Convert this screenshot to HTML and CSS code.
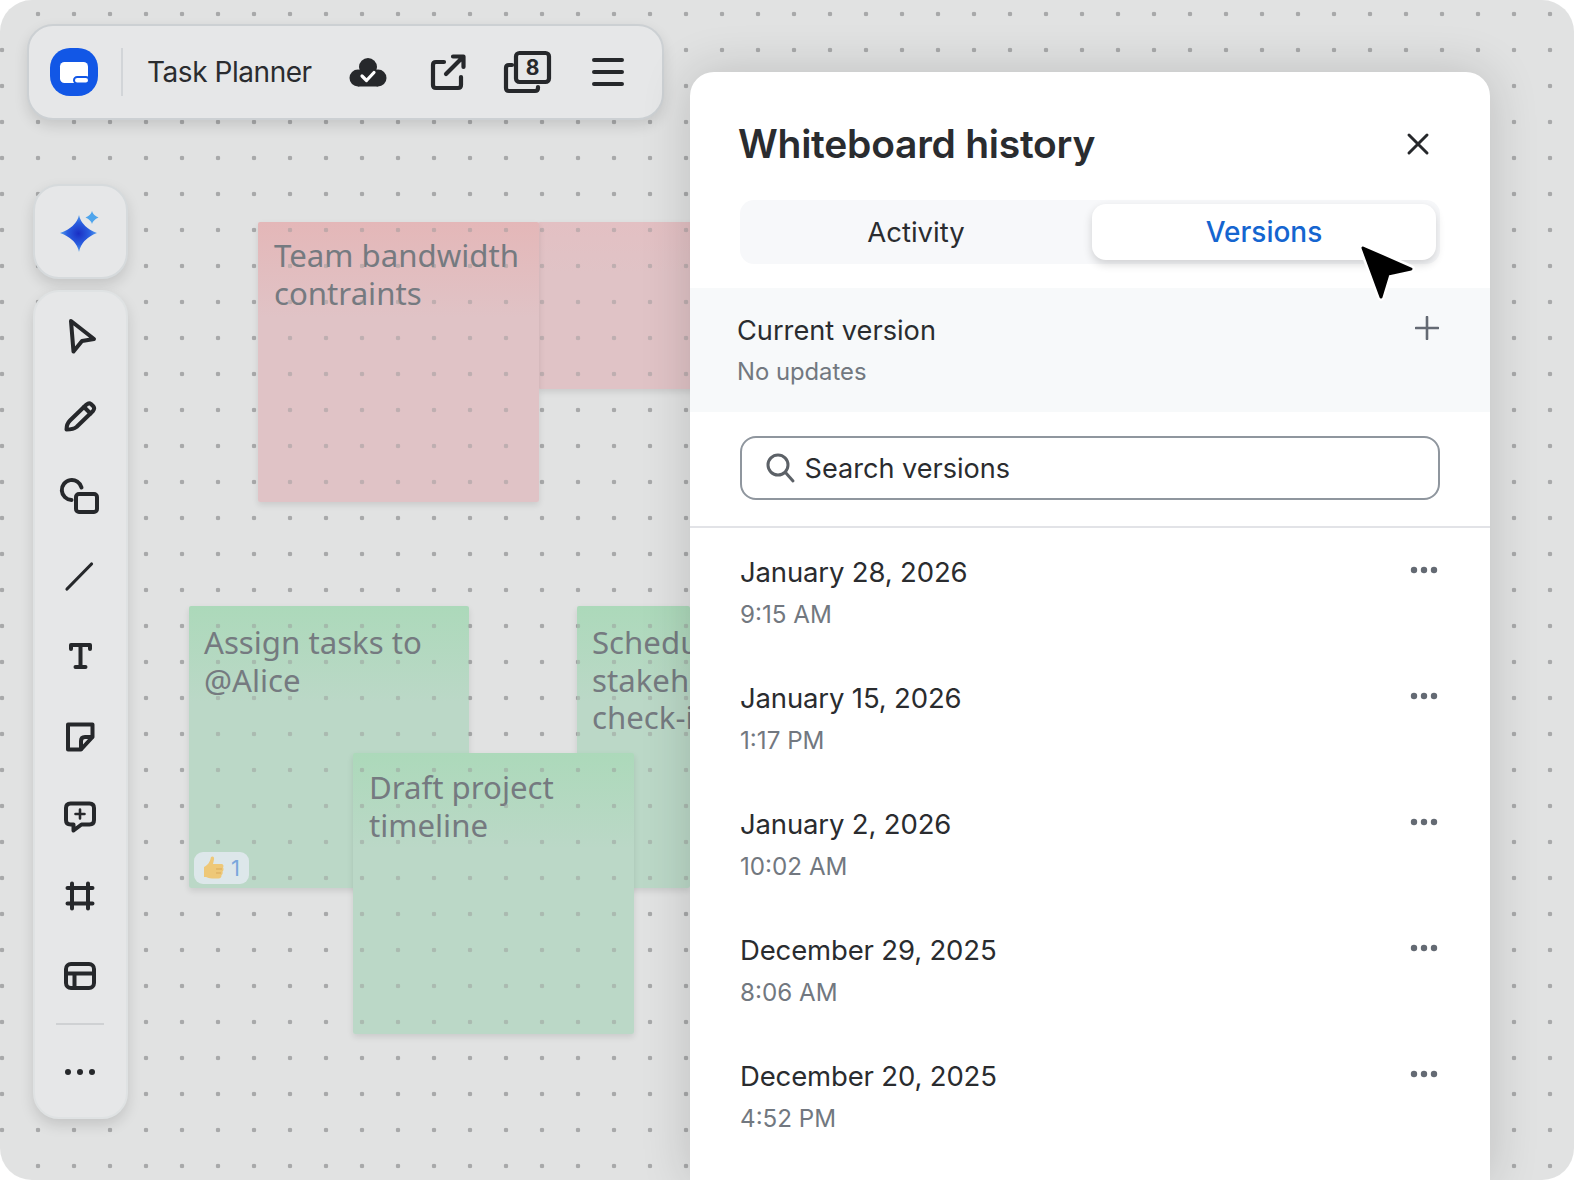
FILE: index.html
```html
<!DOCTYPE html>
<html lang="en">
<head>
<meta charset="utf-8">
<title>Whiteboard history</title>
<link rel="stylesheet" href="styles.css">
</head>
<body>
<main class="canvas">
  <div class="sticky pink s2 flat"></div>
  <div class="sticky pink s0"><p>Team bandwidth contraints</p></div>
  <div class="sticky green s3">
    <p>Assign tasks to @Alice</p>
    <div class="reaction">
      <svg class="thumb" viewBox="0 0 24 26"><path d="M9 2c2-1.500 3.500 0 3 2.500L11 9h8c2.500 0 3 2 2 3.500 1 1.500.5 3-.5 4 .5 1.500 0 3-1 3.500.2 2-1 3.500-3 3.500H10c-3 0-4-1-6-1.500L2 22V12c4-2 6-5 7-10z" fill="#eec878"/><path d="M14 14h6M14 18h5" stroke="#d9a95a" stroke-width="1" fill="none"/></svg>
      <span>1</span>
    </div>
  </div>
  <div class="sticky green s4"><p>Schedule stakeholder check-in</p></div>
  <div class="sticky green s5"><p>Draft project timeline</p></div>

  <header class="topbar">
    <svg class="logo" viewBox="0 0 48 48">
      <rect width="48" height="48" rx="20" fill="#1257e6"/>
      <rect x="10" y="14" width="28" height="21" rx="4.500" fill="#fff"/>
      <rect x="24" y="29" width="15" height="6.500" rx="3.200" fill="#fff" stroke="#1257e6" stroke-width="2"/>
    </svg>
    <span class="sep"></span>
    <h2 class="doc-title">Task Planner</h2>
    <svg class="ico ico-cloud" viewBox="0 0 40 40">
      <circle cx="20" cy="15" r="9" fill="#26282b"/><circle cx="10" cy="26" r="8.500" fill="#26282b"/><circle cx="30" cy="26" r="8.500" fill="#26282b"/><rect x="10" y="20" width="20" height="14.500" fill="#26282b"/>
      <path d="M14 24l4.500 4.500 7.500-8" fill="none" stroke="#fff" stroke-width="3.200" stroke-linecap="round" stroke-linejoin="round"/>
    </svg>
    <svg class="ico ico-share" viewBox="0 0 40 40" fill="none" stroke="#26282b" stroke-width="4.200" stroke-linecap="round" stroke-linejoin="round">
      <path d="M16 10H8q-3 0-3 3v20q0 3 3 3h22q3 0 3-3v-8"/><path d="M18 22L35 5M25 4.500h10.500V15"/>
    </svg>
    <svg class="ico-copies" viewBox="0 -1 48 44" fill="none" stroke="#26282b" stroke-width="4.200" stroke-linecap="round" stroke-linejoin="round">
      <rect x="13" y="2" width="33" height="29" rx="3.500"/>
      <path d="M9 14H6q-3 0-3 3v20q0 3 3 3h26q3 0 3-3v-1"/>
      <text x="29.500" y="23.500" class="count">8</text>
    </svg>
    <svg class="ico-menu" viewBox="0 0 36 32" stroke="#26282b" stroke-width="4" stroke-linecap="round">
      <path d="M4 4h28M4 16h28M4 28h28"/>
    </svg>
  </header>

  <nav class="tools">
    <button class="ai-btn" aria-label="AI">
      <svg class="ico" viewBox="0 0 40 40">
        <defs>
          <radialGradient id="st" cx="50%" cy="50%" r="55%"><stop offset="0" stop-color="#1a2fc4"/><stop offset=".55" stop-color="#2a5fe0"/><stop offset="1" stop-color="#63b2ef"/></radialGradient>
        </defs>
        <path d="M20 3Q22.500 15 38 21 22.500 27 20 40 17.500 27 1 21 17.500 15 20 3z" fill="url(#st)"/>
        <path d="M33 -1Q34 3 39.500 5.500 34 8 33 12 32 8 26.500 5.500 32 3 33-1z" fill="#4fa5ec"/>
      </svg>
    </button>
    <div class="rail">
      <button class="tool"><svg class="ico" viewBox="0 0 40 40"><path d="M11 5L34 23l-12 2-8.500 10.500z"/></svg></button>
      <button class="tool"><svg class="ico" viewBox="0 0 40 40"><path d="M6.500 33.500c0-4.500 1.500-7 3.500-9L26.500 8.500q2.500-2 4.500-.5l2.500 2.500q1.500 2-.5 4.500L16.500 31c-2.500 2-5.500 2.500-10 2.500z"/><path d="M24 11l6.500 6.500"/></svg></button>
      <button class="tool"><svg class="ico" viewBox="0 0 40 40"><path d="M21.500 11.500A10 10 0 1 0 11.500 24"/><rect x="16" y="18" width="21" height="18" rx="3"/></svg></button>
      <button class="tool"><svg class="ico thin" viewBox="0 0 40 40"><path d="M7 33L31.500 8"/></svg></button>
      <button class="tool"><svg class="ico" viewBox="0 0 40 40"><path d="M11 13V9h19v4M20.500 9v22M15.500 31h10"/></svg></button>
      <button class="tool"><svg class="ico" viewBox="0 0 40 40"><path d="M8 8.500h24.500V21L21 33.500H8z"/><path d="M32 21h-7q-4 0-4 4v8"/></svg></button>
      <button class="tool"><svg class="ico" viewBox="0 0 40 40"><path d="M10.500 7.500h19q4.500 0 4.500 4.500v12q0 4.500-4.500 4.500h-8l-8 6v-6h-3Q6 28.500 6 24V12q0-4.500 4.500-4.500z"/><path class="plus" d="M20 13.500v9M15.500 18h9"/></svg></button>
      <button class="tool"><svg class="ico" viewBox="0 0 40 40"><path d="M12 7.500v25M28 7.500v25M7.500 12h25M7.500 27.500h25"/></svg></button>
      <button class="tool"><svg class="ico" viewBox="0 0 40 40"><rect x="6" y="8" width="28" height="24" rx="5"/><path d="M6 17.500h28M14.500 18v14"/></svg></button>
      <span class="rail-sep"></span>
      <button class="tool"><svg class="ico dots" viewBox="0 0 40 40"><circle cx="8" cy="20" r="3"/><circle cx="20" cy="20" r="3"/><circle cx="32" cy="20" r="3"/></svg></button>
    </div>
  </nav>

  <aside class="panel">
    <div class="panel-head">
      <h1>Whiteboard history</h1>
      <svg class="close" viewBox="0 0 24 24"><path d="M3 3l18 18M21 3L3 21"/></svg>
    </div>
    <div class="tabs">
      <div class="tab">Activity</div>
      <div class="tab active">Versions</div>
    </div>
    <section class="current">
      <div>
        <div class="current-name">Current version</div>
        <div class="current-sub">No updates</div>
      </div>
      <svg class="add" viewBox="0 0 24 24"><path d="M12 1v22M1 12h22"/></svg>
    </section>
    <div class="search">
      <svg class="search-ico" viewBox="0 0 28 30"><circle cx="12" cy="12" r="10"/><path d="M19.500 19.500L27 28"/></svg>
      <span>Search versions</span>
    </div>
    <ul class="versions">
      <li class="version"><div><div class="v-date">January 28, 2026</div><div class="v-time">9:15 AM</div></div><svg class="more" viewBox="0 0 30 8"><circle cx="5" cy="4" r="3.200"/><circle cx="15" cy="4" r="3.200"/><circle cx="25" cy="4" r="3.200"/></svg></li>
      <li class="version"><div><div class="v-date">January 15, 2026</div><div class="v-time">1:17 PM</div></div><svg class="more" viewBox="0 0 30 8"><circle cx="5" cy="4" r="3.200"/><circle cx="15" cy="4" r="3.200"/><circle cx="25" cy="4" r="3.200"/></svg></li>
      <li class="version"><div><div class="v-date">January 2, 2026</div><div class="v-time">10:02 AM</div></div><svg class="more" viewBox="0 0 30 8"><circle cx="5" cy="4" r="3.200"/><circle cx="15" cy="4" r="3.200"/><circle cx="25" cy="4" r="3.200"/></svg></li>
      <li class="version"><div><div class="v-date">December 29, 2025</div><div class="v-time">8:06 AM</div></div><svg class="more" viewBox="0 0 30 8"><circle cx="5" cy="4" r="3.200"/><circle cx="15" cy="4" r="3.200"/><circle cx="25" cy="4" r="3.200"/></svg></li>
      <li class="version"><div><div class="v-date">December 20, 2025</div><div class="v-time">4:52 PM</div></div><svg class="more" viewBox="0 0 30 8"><circle cx="5" cy="4" r="3.200"/><circle cx="15" cy="4" r="3.200"/><circle cx="25" cy="4" r="3.200"/></svg></li>
    </ul>
  </aside>

  <svg class="cursor" viewBox="0 0 64 64"><path d="M8 6L56 27 33 32 26 55z" fill="#000" stroke="#fff" stroke-width="8" stroke-linejoin="round"/><path d="M8 6L56 27 33 32 26 55z" fill="#000" stroke="#000" stroke-width="3" stroke-linejoin="round"/></svg>
</main>
</body>
</html>
```
FILE: styles.css
```css
* { box-sizing: border-box; }
html, body { margin: 0; height: 100%; background: #fff; }
body { font-family: Inter, "Liberation Sans", sans-serif; color: #2a2c2f; overflow: hidden; }
h1, h2, p, ul { margin: 0; padding: 0; }
button { border: 0; background: none; padding: 0; display: flex; align-items: center; justify-content: center; }

.canvas {
  position: relative;
  width: 1574px;
  height: 1180px;
  overflow: hidden;
  border-radius: 32px;
  background-color: #e1e2e2;
  background-image: radial-gradient(circle at 18px 18px, #a8a9aa 0, #a8a9aa 2px, transparent 2.6px);
  background-size: 36px 36px;
  background-position: -16px -4px;
}

/* free canvas items */
.sticky {
  position: absolute;
  width: 280px;
  height: 280px;
  padding: 15px 16px;
  font-family: "Noto Sans", sans-serif;
  font-size: 31.200px;
  line-height: 37.600px;
  color: #757a80;
  box-shadow: 0 3px 6px rgba(0, 0, 0, .1);
  border-radius: 2px;
}
.sticky::after {
  content: "";
  position: absolute;
  inset: 0;
  background-image: radial-gradient(circle at 18px 18px, rgba(150, 150, 150, .45) 0, rgba(150, 150, 150, .45) 2px, transparent 2.6px);
  background-size: 36px 36px;
  background-position: -16px -4px;
  background-attachment: fixed;
}
.pink { background: linear-gradient(#e4b7b8 0, #e0c3c6 34%); }
.green { background: linear-gradient(#acd9ba 0, #bbd8c7 34%); }
.flat.pink { background: linear-gradient(#e3c0c3, #e0c3c6 30%); }
.s0 { left: 258px; top: 222px; width: 280.500px; }
.s2 { left: 538px; top: 222px; height: 167px; }
.s3 { left: 189px; top: 606px; height: 282px; padding: 18px 15px; }
.s4 { left: 577px; top: 606px; width: 113px; height: 282px; padding: 18px 0 0 15px; overflow: hidden; }
.s4 p { width: 250px; }
.s5 { left: 353px; top: 753px; width: 281px; height: 281px; padding: 16px; }

.reaction {
  position: absolute;
  left: 5px;
  bottom: 4px;
  z-index: 1;
  width: 55px;
  height: 32px;
  display: flex;
  align-items: center;
  gap: 5px;
  padding-left: 8px;
  border-radius: 9px;
  background: #dde7ea;
  font: 400 22px/1 Inter, sans-serif;
  color: #7aa7dc;
}
.thumb { width: 24px; height: 26px; flex: none; }

/* top bar */
.topbar {
  position: absolute;
  left: 27px;
  top: 24px;
  width: 637px;
  height: 96px;
  display: flex;
  align-items: center;
  padding-left: 21px;
  border: 2px solid #ccd0d3;
  border-radius: 26px;
  background: #e6e7e8;
  box-shadow: 0 6px 14px rgba(0, 0, 0, .12);
}
.logo { width: 48px; height: 48px; flex: none; }
.sep { width: 2px; height: 48px; margin: 0 24px 0 23px; background: #d2d5d8; flex: none; }
.doc-title { width: 201px; flex: none; font-size: 28px; font-weight: 400; letter-spacing: -.45px; color: #2a2c2f; }
.ico { width: 40px; height: 40px; flex: none; display: block; overflow: visible; }
.ico-share { margin-left: 40px; }
.ico-copies { width: 48px; height: 44px; margin-left: 35px; flex: none; overflow: visible; }
.ico-menu { width: 36px; height: 32px; margin-left: 39px; flex: none; }
.count { font: 700 21px Inter, sans-serif; fill: #26282b; stroke: none; text-anchor: middle; }

/* left tools */
.tools {
  position: absolute;
  left: 33px;
  top: 184px;
  width: 95px;
  display: flex;
  flex-direction: column;
  gap: 11px;
}
.ai-btn, .rail {
  width: 95px;
  border-radius: 26px;
  border: 2px solid #d6dadc;
  background: #e6e7e8;
  box-shadow: 0 6px 14px rgba(0, 0, 0, .13);
}
.ai-btn { height: 95px; padding-right: 3px; }
.rail {
  height: 829px;
  padding: 4px 0;
  display: flex;
  flex-direction: column;
  align-items: flex-start;
  border-color: #dfe2e3;
}
.tool { width: 89px; height: 80px; flex: none; }
.tool .ico { fill: none; stroke: #26282b; stroke-width: 4; stroke-linecap: round; stroke-linejoin: round; }
.tool .ico.thin { stroke-width: 3.200; }
.tool .ico .plus { stroke-width: 2.600; }
.tool .ico.dots { fill: #26282b; stroke: none; }
.rail-sep { width: 48px; height: 2px; margin: 7px 0 7px 21px; background: #cfd1d3; flex: none; }

/* panel */
.panel {
  position: absolute;
  left: 690px;
  top: 72px;
  bottom: -2px;
  width: 800px;
  padding-top: 50px;
  border-radius: 24px 24px 0 0;
  background: #fff;
  box-shadow: 0 0 50px rgba(0, 0, 0, .16);
  overflow: hidden;
}
.panel-head {
  height: 44px;
  padding: 0 62px 0 48px;
  display: flex;
  align-items: center;
  justify-content: space-between;
}
.panel-head h1 { font-size: 39px; line-height: 44px; font-weight: 600; letter-spacing: -.25px; color: #2a2c2f; }
.close { width: 24px; height: 24px; fill: none; stroke: #26282b; stroke-width: 3; stroke-linecap: round; margin-right: -2px; }

.tabs {
  margin: 34px 50px 0;
  height: 64px;
  padding: 4px 4px 4px 0;
  display: grid;
  grid-template-columns: 1fr 344px;
  border-radius: 14px;
  background: #f7f8fa;
  font-size: 27.500px;
}
.tab { display: flex; align-items: center; justify-content: center; color: #2a2c2f; }
.tab.active {
  border-radius: 14px;
  background: #fff;
  color: #1565d0;
  font-size: 28px;
  font-weight: 500;
  box-shadow: 0 4px 10px rgba(0, 0, 0, .16);
}

.current {
  margin-top: 24px;
  height: 124px;
  padding: 23px 50px 0 47px;
  display: flex;
  justify-content: space-between;
  align-items: flex-start;
  background: #f7f9fa;
}
.current-name { font-size: 27.200px; line-height: 40px; color: #2a2c2f; }
.current-sub { margin-top: 3px; font-size: 23.800px; line-height: 36px; color: #727880; }
.add { width: 24px; height: 24px; margin-top: 5px; fill: none; stroke: #646a73; stroke-width: 2.600; stroke-linecap: round; margin-right: 1px; }

.search {
  margin: 24px 50px 0 50px;
  height: 64px;
  padding-left: 24px;
  display: flex;
  align-items: center;
  gap: 10.500px;
  border: 2px solid #8f969e;
  border-radius: 16px;
  font-size: 27.100px;
  color: #2a2c2f;
}
.search-ico { width: 28px; height: 30px; fill: none; stroke: #5c6167; stroke-width: 3; stroke-linecap: round; flex: none; overflow: visible; }

.versions { margin-top: 26px; list-style: none; border-top: 2px solid #e2e3e7; }
.version {
  height: 126px;
  padding: 25px 51px 0 50px;
  display: flex;
  justify-content: space-between;
  align-items: flex-start;
}
.v-date { font-size: 27.500px; letter-spacing: -.15px; line-height: 38px; color: #2a2c2f; }
.v-time { margin-top: 7px; font-size: 24.200px; line-height: 34px; color: #727880; }
.more { width: 30px; height: 8px; margin-top: 13px; fill: #646a73; flex: none; }

.cursor { position: absolute; left: 1355px; top: 242px; width: 64px; height: 64px; overflow: visible; }
```
